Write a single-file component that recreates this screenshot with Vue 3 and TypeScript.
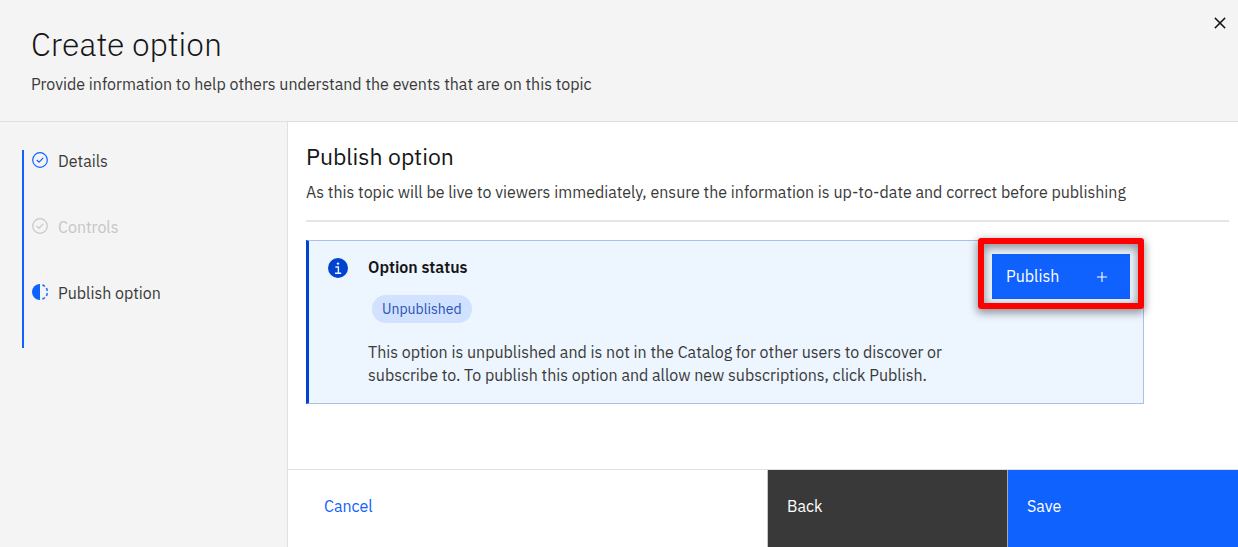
<script setup lang="ts">
type StepState = 'complete' | 'disabled' | 'current'

interface Step {
  label: string
  state: StepState
}

const steps: Step[] = [
  { label: 'Details', state: 'complete' },
  { label: 'Controls', state: 'disabled' },
  { label: 'Publish option', state: 'current' },
]
</script>

<template>
  <div class="tearsheet">
    <header class="header">
      <div>
        <h1>Create option</h1>
        <p>Provide information to help others understand the events that are on this topic</p>
      </div>
      <button class="close" type="button" aria-label="Close">
        <svg width="22" height="22" viewBox="0 0 32 32" fill="currentColor" aria-hidden="true">
          <path d="M24 9.4 22.6 8 16 14.6 9.4 8 8 9.4l6.6 6.6L8 22.6 9.4 24l6.6-6.6 6.6 6.6 1.4-1.4-6.6-6.6L24 9.4z" stroke="currentColor" stroke-width="0.4" />
        </svg>
      </button>
    </header>

    <div class="body">
      <nav class="sidebar" aria-label="Progress">
        <ol class="steps">
          <li v-for="step in steps" :key="step.label" class="step" :class="step.state">
            <svg v-if="step.state === 'current'" class="step-icon" viewBox="2 2 28 28" fill="currentColor" aria-hidden="true">
              <path d="M23.765 6.857l1.285-1.532a13.976 13.976 0 0 0-4.182-2.441l-.683 1.878a11.973 11.973 0 0 1 3.58 2.095z" stroke="currentColor" stroke-width=".8" />
              <path d="M27.81 14l1.968-.413a13.889 13.889 0 0 0-1.638-4.541L26.409 10.045A12.52 12.52 0 0 1 27.81 14z" stroke="currentColor" stroke-width=".8" />
              <path d="M20.185 27.238l.683 1.878a13.976 13.976 0 0 0 4.182-2.441l-1.285-1.532a11.973 11.973 0 0 1-3.58 2.095z" stroke="currentColor" stroke-width=".8" />
              <path d="M26.409 22l1.731 1a14.14 14.14 0 0 0 1.638-4.587l-1.968-.347A12.152 12.152 0 0 1 26.409 22z" stroke="currentColor" stroke-width=".8" />
              <path d="M16 30V2a14 14 0 0 0 0 28z" />
            </svg>
            <svg v-else class="step-icon" viewBox="0 0 16 16" fill="none" stroke="currentColor" stroke-width="1.2" aria-hidden="true">
              <circle cx="8" cy="8" r="7.3" />
              <path d="M4.7 8 7 10.1l4.2-4.2" />
            </svg>
            <span>{{ step.label }}</span>
          </li>
        </ol>
      </nav>

      <div class="main">
        <main class="content">
          <h2>Publish option</h2>
          <p class="lead">
            As this topic will be live to viewers immediately, ensure the information is up-to-date and correct before publishing
          </p>
          <hr />
          <section class="notice" aria-labelledby="status-title">
            <svg class="info-icon" viewBox="0 0 20 20" aria-hidden="true">
              <circle cx="10" cy="10" r="10" fill="#0043ce" />
              <circle cx="10" cy="5.6" r="1.2" fill="#edf5ff" />
              <path d="M7.4 9h3v6M7 15.2h6.2" fill="none" stroke="#edf5ff" stroke-width="1.4" />
            </svg>
            <div class="notice-text">
              <h3 id="status-title">Option status</h3>
              <span class="tag">Unpublished</span>
              <p>
                This option is unpublished and is not in the Catalog for other users to discover or subscribe to. To publish this option and allow new subscriptions, click Publish.
              </p>
            </div>
            <div class="action">
              <button class="publish" type="button">
                <span>Publish</span>
                <svg width="18" height="18" viewBox="0 0 32 32" fill="currentColor" aria-hidden="true">
                  <path d="M17 15V7h-2v8H7v2h8v8h2v-8h8v-2h-8z" />
                </svg>
              </button>
              <span class="highlight" aria-hidden="true"></span>
            </div>
          </section>
        </main>

        <footer class="footer">
          <button class="cancel" type="button">Cancel</button>
          <button class="back" type="button">Back</button>
          <button class="save" type="button">Save</button>
        </footer>
      </div>
    </div>
  </div>
</template>

<style>
body {
  margin: 0;
}
</style>

<style scoped>
.tearsheet {
  display: flex;
  flex-direction: column;
  min-height: 100vh;
  background: #fff;
  color: #393939;
  font-family: "IBM Plex Sans", "Noto Sans", sans-serif;
  font-size: 16px;
  line-height: 23px;
}

h1, h2, h3, p {
  margin: 0;
}

button {
  border: 0;
  margin: 0;
  font: inherit;
  text-align: left;
  cursor: pointer;
}

.header {
  display: flex;
  justify-content: space-between;
  align-items: flex-start;
  padding: 24px 7px 25px 31px;
  background: #f4f4f4;
  border-bottom: 1px solid #e0e0e0;
}

h1 {
  color: #161616;
  font-size: 32px;
  font-weight: 300;
  line-height: 40px;
  margin-bottom: 9px;
}

.close {
  display: flex;
  padding: 0;
  margin-top: -12px;
  background: none;
  color: #161616;
}

.body {
  display: flex;
  flex: 1;
}

.sidebar {
  flex: 0 0 287px;
  background: #f4f4f4;
  border-right: 1px solid #e0e0e0;
}

.steps {
  list-style: none;
  margin: 28px 0 0 22px;
  padding: 0;
  border-left: 2px solid #0f62fe;
}

.step {
  display: flex;
  gap: 10px;
  height: 66px;
  padding-left: 8px;
}

.step-icon {
  flex: none;
  width: 16px;
  height: 16px;
  margin-top: 2px;
  color: #0f62fe;
}

.disabled,
.disabled .step-icon {
  color: #c6c6c6;
}

.main {
  display: flex;
  flex: 1;
  flex-direction: column;
  min-width: 0;
}

.content {
  flex: 1;
  padding: 19px 9px 24px 18px;
}

h2 {
  color: #161616;
  font-size: 23px;
  font-weight: 400;
  line-height: 30px;
  margin-bottom: 10px;
}

hr {
  height: 2px;
  margin: 16px 0 18px;
  border: 0;
  background: #e5e5e5;
}

.notice {
  display: flex;
  align-items: flex-start;
  box-sizing: border-box;
  margin-right: 85px;
  padding: 15px 13px 16px 19px;
  border: 1px solid #a8c0f0;
  border-left: 3px solid #0043ce;
  background: #edf5ff;
}

.info-icon {
  flex: none;
  width: 20px;
  height: 20px;
  margin: 2px 20px 0 0;
}

.notice-text {
  flex: 0 1 600px;
}

h3 {
  color: #161616;
  font-size: 16px;
  font-weight: 600;
  line-height: 23px;
}

.tag {
  display: inline-block;
  margin: 16px 4px 18px;
  padding: 0 10px;
  border-radius: 14px;
  background: #d0e2ff;
  color: #2b50b8;
  font-size: 14px;
  line-height: 28px;
  vertical-align: top;
}

.action {
  position: relative;
  margin: -2px 0 0 auto;
}

.publish {
  display: flex;
  align-items: center;
  justify-content: space-between;
  width: 138px;
  height: 45px;
  padding: 0 19px 0 14px;
  background: #0f62fe;
  color: #fff;
}

.highlight {
  position: absolute;
  inset: -16px -14px -10px;
  border: 6px solid #f00;
  border-radius: 3px;
  box-shadow: 0 3px 8px 1px rgba(0, 0, 0, 0.4), inset 0 3px 8px 1px rgba(0, 0, 0, 0.4);
  pointer-events: none;
}

.footer {
  display: grid;
  grid-template-columns: 1fr 240px 231px;
  border-top: 1px solid #e0e0e0;
}

.footer button {
  height: 77px;
  padding: 0 19px 4px;
  color: #fff;
}

.footer .cancel {
  padding-left: 36px;
  background: #fff;
  color: #0f62fe;
}

.footer .back {
  background: #393939;
  border-left: 1px solid #c6c6c6;
}

.footer .save {
  background: #0f62fe;
  border-left: 1px solid #a8a8a8;
}
</style>
